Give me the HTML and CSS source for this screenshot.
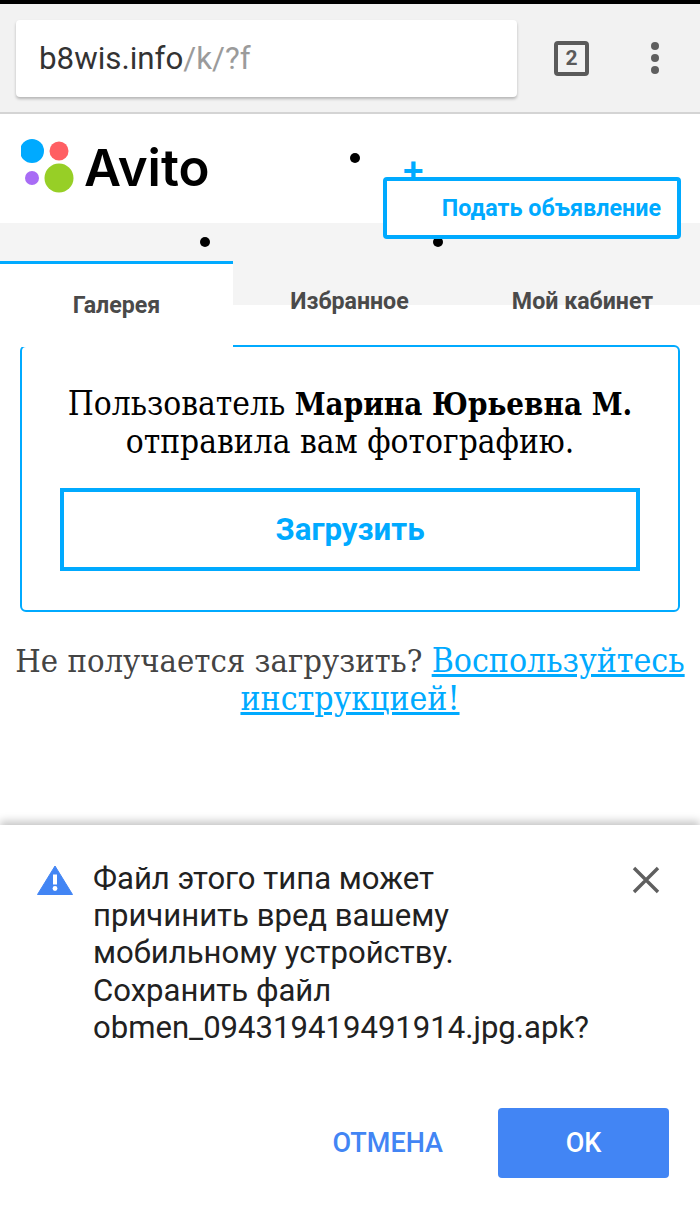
FILE: index.html
```html
<!DOCTYPE html>
<html lang="ru">
<head>
  <meta charset="UTF-8" />
  <meta name="viewport" content="width=device-width, initial-scale=1.0"/>
  <title>Avito</title>
  <link rel="stylesheet" href="styles.css">
</head>
<body>
  <div class="toolbar">
    <div class="urlbar"><span class="host">b8wis.info</span><span class="path">/k/?f</span></div>
    <div class="tabcount">2</div>
    <div class="menu"><i></i><i></i><i></i></div>
  </div>

  <div class="page">
    <div class="header">
      <div class="logo">
        <svg class="logo-dots" width="56" height="56" viewBox="0 0 56 56">
          <circle cx="11" cy="12" r="12" fill="#00aaff"/>
          <circle cx="38" cy="12" r="9.5" fill="#ff5f63"/>
          <circle cx="11" cy="39" r="7" fill="#a86cf5"/>
          <circle cx="38" cy="39" r="14.5" fill="#97cf26"/>
        </svg>
        <span class="logo-text">Avito</span>
      </div>
      <span class="dot dot-top"></span>
      <span class="plus">+</span>
      <a class="add-btn">Подать объявление</a>
    </div>

    <div class="tabs">
      <span class="dot dot-left"></span>
      <span class="dot dot-right"></span>
      <div class="tab tab-active">Галерея</div>
      <div class="tab">Избранное</div>
      <div class="tab">Мой кабинет</div>
    </div>

    <div class="card">
      <p class="message">Пользователь <b>Марина Юрьевна М.</b><br>отправила вам фотографию.</p>
      <a class="load-btn">Загрузить</a>
    </div>

    <p class="help">Не получается загрузить? <a href="#">Воспользуйтесь инструкцией!</a></p>
  </div>

  <div class="dialog">
    <div class="dialog-body">
      <svg class="warn" width="36" height="30" viewBox="0 0 36 30">
        <path d="M18 1 L35.5 29.5 H0.5 Z" fill="#4285f4" stroke="#4285f4" stroke-linejoin="round"/>
        <rect x="16" y="9.5" width="4" height="10" fill="#fff"/>
        <circle cx="18" cy="23.5" r="2.4" fill="#fff"/>
      </svg>
      <div class="dialog-text">Файл этого типа может<br>причинить вред вашему<br>мобильному устройству.<br>Сохранить файл<br>obmen_094319419491914.jpg.apk?</div>
      <svg class="close" width="28" height="28" viewBox="0 0 28 28">
        <path d="M2 2 L26 26 M26 2 L2 26" stroke="#5f5f5f" stroke-width="3.4"/>
      </svg>
    </div>
    <div class="dialog-actions">
      <a class="cancel">ОТМЕНА</a>
      <a class="ok">OK</a>
    </div>
  </div>
</body>
</html>
```

FILE: styles.css
```css
html, body {
  margin: 0;
  height: 1209px;
  overflow: hidden;
}
body {
  display: flex;
  flex-direction: column;
  width: 700px;
  background: #fff;
  font-family: Roboto, sans-serif;
  border-top: 4px solid #000;
  box-sizing: border-box;
}
.toolbar {
  display: flex;
  align-items: center;
  height: 110px;
  padding-left: 16px;
  box-sizing: border-box;
  background: #f2f2f2;
  border-bottom: 2px solid #d4d4d4;
}
.urlbar {
  width: 501px;
  height: 77px;
  line-height: 77px;
  padding-left: 23px;
  box-sizing: border-box;
  background: #fff;
  border-radius: 4px;
  box-shadow: 0 2px 3px rgba(0,0,0,0.25);
  font-size: 31.3px;
}
.host { color: #333; }
.path { color: #9b9b9b; }
.tabcount {
  width: 35px;
  height: 35px;
  margin-left: 37px;
  border: 4px solid #5a5a5a;
  border-radius: 4px;
  box-sizing: border-box;
  text-align: center;
  line-height: 27px;
  font-size: 21px;
  font-weight: 700;
  color: #5a5a5a;
}
.menu {
  display: flex;
  flex-direction: column;
  gap: 4px;
  margin-left: 62px;
}
.menu i {
  width: 8px;
  height: 8px;
  border-radius: 50%;
  background: #5f5f5f;
}

.page {
  position: relative;
  height: 711px;
}
.header {
  position: relative;
  height: 109px;
}
.logo {
  display: flex;
  align-items: flex-start;
  padding: 25px 0 0 21px;
}
.logo-text {
  margin: -1px 0 0 7px;
  font-family: Inter, sans-serif;
  font-weight: 600;
  font-size: 51px;
  line-height: 60px;
  color: #000;
}
.dot {
  position: absolute;
  width: 10px;
  height: 10px;
  border-radius: 50%;
  background: #000;
}
.dot-top { left: 350px; top: 39px; }
.dot-left { left: 200px; top: 14px; }
.dot-right { left: 433px; top: 14px; }
.plus {
  position: absolute;
  left: 403px;
  top: 36px;
  font-size: 37px;
  line-height: 44px;
  font-weight: 500;
  color: #00aaff;
}
.add-btn {
  position: absolute;
  z-index: 2;
  left: 383px;
  top: 63px;
  width: 298px;
  height: 62px;
  padding-right: 16px;
  box-sizing: border-box;
  border: 4px solid #00aaff;
  border-radius: 4px;
  background: #fff;
  text-align: right;
  line-height: 54px;
  font-size: 23.3px;
  font-weight: 700;
  color: #00aaff;
}

.tabs {
  position: relative;
  display: flex;
  height: 82px;
  background: #f4f4f4;
}
.tab {
  width: 233px;
  padding-top: 64px;
  box-sizing: border-box;
  text-align: center;
  font-size: 23.2px;
  font-weight: 700;
  line-height: 28px;
  color: #4a4a4a;
}
.tab-active {
  position: relative;
  z-index: 1;
  height: 86px;
  margin-top: 38px;
  padding-top: 27px;
  border-top: 3px solid #00aaff;
  background: #fff;
}
.card {
  width: 660px;
  height: 267px;
  margin: 40px 0 0 20px;
  padding: 38px 38px 0;
  box-sizing: border-box;
  border: 2px solid #00aaff;
  border-radius: 6px;
}
.message {
  margin: 0;
  text-align: center;
  white-space: nowrap;
  font-family: "DejaVu Serif Condensed", "DejaVu Serif", serif;
  font-size: 33.2px;
  line-height: 38px;
  color: #000;
}
.message b {
  font-size: 31px;
}
.load-btn {
  display: block;
  height: 83px;
  margin-top: 27px;
  box-sizing: border-box;
  border: 4px solid #00aaff;
  text-align: center;
  line-height: 75px;
  font-size: 31.2px;
  font-weight: 700;
  color: #00aaff;
}
.help {
  margin: 30px 0 0;
  padding: 0 8px;
  text-align: center;
  font-family: "DejaVu Serif Condensed", "DejaVu Serif", serif;
  font-size: 32.5px;
  line-height: 37px;
  color: #444;
}
.help a {
  font-size: 33.5px;
  color: #00aaff;
}

.dialog {
  flex: 1;
  position: relative;
  background: #fff;
  box-shadow: 0 -4px 8px rgba(0,0,0,0.22);
}
.dialog-body {
  position: relative;
  padding: 35px 0 0 93px;
}
.warn {
  position: absolute;
  left: 37px;
  top: 40px;
}
.close {
  position: absolute;
  left: 632px;
  top: 41px;
}
.dialog-text {
  font-size: 31.1px;
  line-height: 37.2px;
  color: #212121;
}
.dialog-actions {
  display: flex;
  align-items: center;
  justify-content: flex-end;
  margin-top: 62px;
  padding-right: 31px;
}
.cancel {
  margin-right: 55px;
  font-size: 27px;
  font-weight: 500;
  color: #4285f4;
}
.ok {
  width: 171px;
  height: 70px;
  line-height: 70px;
  text-align: center;
  border-radius: 4px;
  background: #4285f4;
  font-size: 27px;
  font-weight: 500;
  color: #fff;
}
```
